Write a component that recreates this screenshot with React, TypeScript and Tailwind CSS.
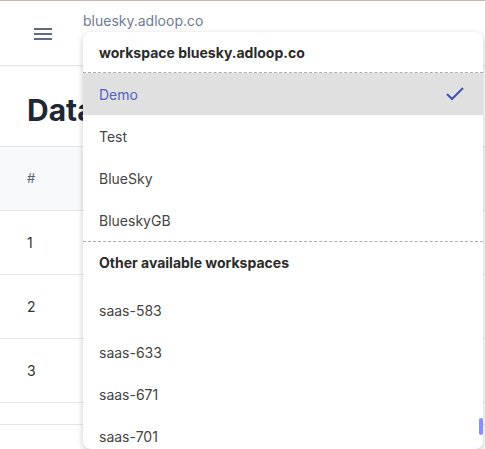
export default function App() {
  const mine = ["Test", "BlueSky", "BlueskyGB"];
  const others = ["saas-583", "saas-633", "saas-671", "saas-701"];
  return (
    <div className="relative w-[485px] h-[449px] overflow-hidden bg-white border-t border-[#c9b8af] font-['Inter',sans-serif]">
      <header className="h-[65px] flex items-start border-b border-[#e3e5ea] shadow-[0_1px_2px_rgba(0,0,0,0.04)]">
        <button className="mt-[27px] ml-[34px] flex flex-col gap-[3px] w-[18px]">
          <span className="h-[2px] w-full bg-[#5f6b7e]"></span>
          <span className="h-[2px] w-full bg-[#5f6b7e]"></span>
          <span className="h-[2px] w-full bg-[#5f6b7e]"></span>
        </button>
        <div className="ml-[31px] mt-[9px] text-[14px] text-[#6f7c90]">bluesky.adloop.co</div>
      </header>

      <main>
        <h1 className="px-[27px] pt-[22px] h-[80px] text-[30px] font-bold text-[#1f2733]">Data</h1>
        <div className="border-t border-[#e3e5ea]">
          <div className="h-[64px] bg-[#f8f9fb] border-b border-[#e3e5ea] flex items-center px-[27px] text-[13px] text-[#5b6575]">#</div>
          {["1", "2", "3"].map(n => (
            <div key={n} className="h-[64px] border-b border-[#e3e5ea] flex items-center px-[27px] text-[14px] text-[#333]">{n}</div>
          ))}
          <div className="h-[22px] border-b border-[#e3e5ea]"></div>
        </div>
      </main>

      <div className="absolute left-[83px] top-[31px] w-[400px] h-[417px] bg-white rounded-[8px] overflow-hidden shadow-[0_2px_6px_rgba(0,0,0,0.22)] text-[14px]">
        <div className="h-[41px] flex items-center px-[16px] font-bold text-[#2b2b2b] border-b border-dashed border-[#a9b0b4]">
          workspace bluesky.adloop.co
        </div>
        <div className="h-[42px] flex items-center justify-between px-[16px] bg-[#e0e0e0] text-[#5262c5]">
          <span>Demo</span>
          <svg width="20" height="16" viewBox="0 0 20 16" className="mr-[2px]">
            <path d="M2 8 L7 13 L18 2" fill="none" stroke="#3f51b5" strokeWidth="2" />
          </svg>
        </div>
        {mine.map(w => (
          <div key={w} className="h-[42px] flex items-center px-[16px] text-[#444]">{w}</div>
        ))}
        <div className="h-[48px] pb-[6px] flex items-center px-[16px] font-bold text-[#2b2b2b] border-t border-dashed border-[#a9b0b4]">
          Other available workspaces
        </div>
        {others.map(w => (
          <div key={w} className="h-[42px] flex items-center px-[16px] text-[#444]">{w}</div>
        ))}
        <div className="absolute right-0 top-[386px] w-[4px] h-[17px] rounded-[2px] bg-[#8a8dfb]"></div>
      </div>
    </div>
  );
}
